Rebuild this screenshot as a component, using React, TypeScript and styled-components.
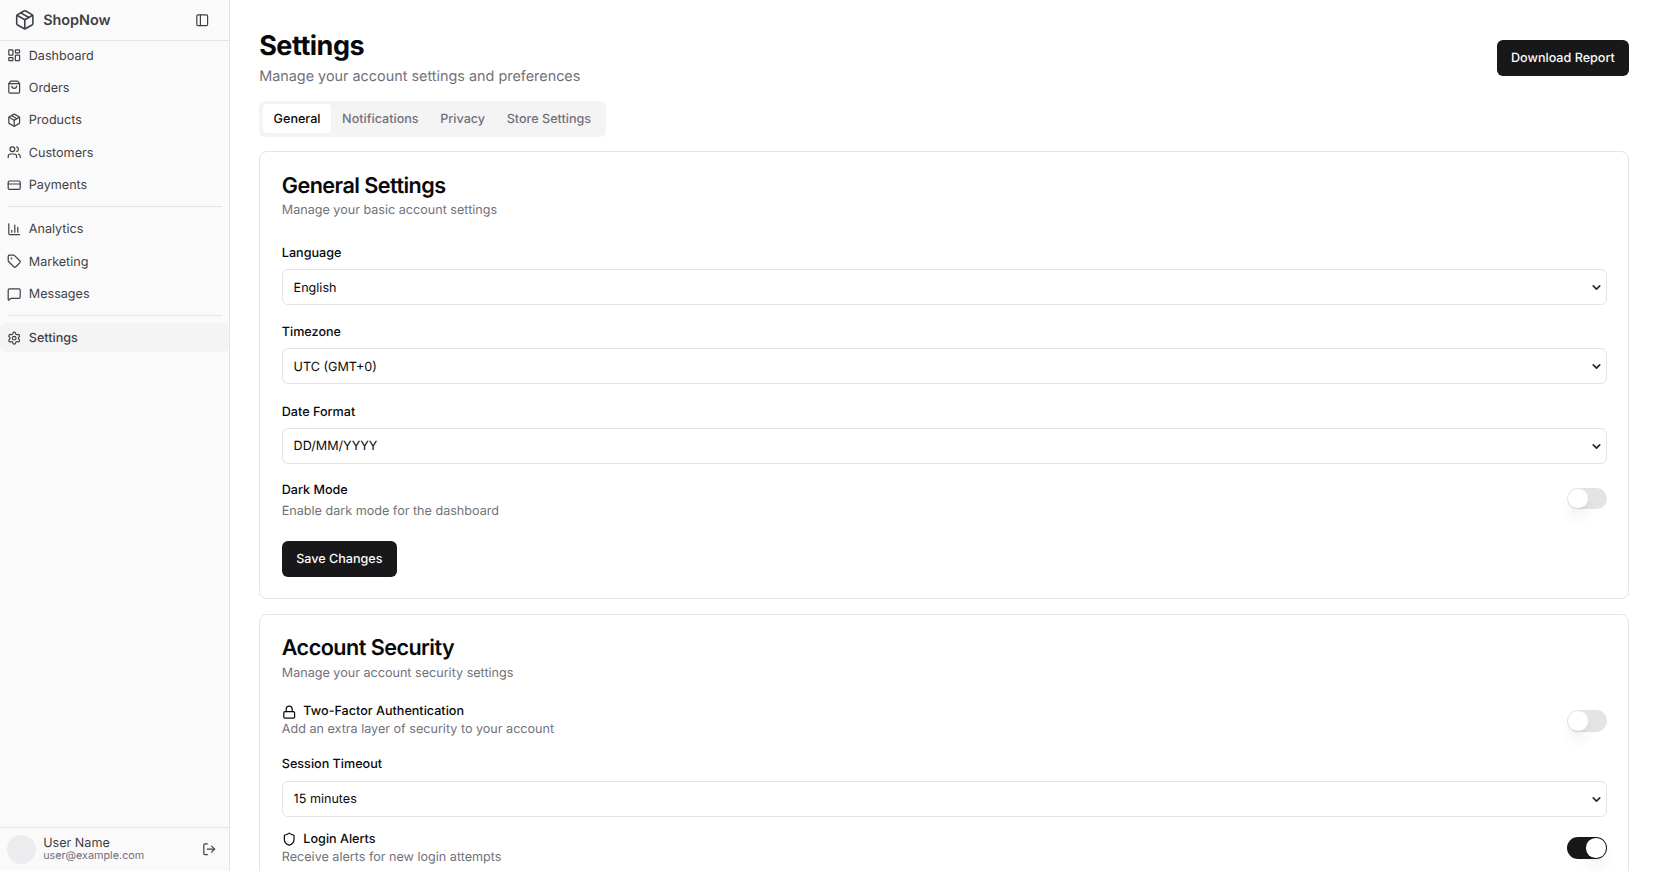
import React, { useState } from "react";
import styled, { createGlobalStyle } from "styled-components";
import {
  LayoutDashboard,
  ShoppingBag,
  Package,
  Users,
  CreditCard,
  BarChart3,
  Tag,
  MessageSquare,
  Settings,
  PanelLeft,
  LogOut,
  Lock,
  Shield,
  ChevronDown,
} from "lucide-react";

const GlobalStyle = createGlobalStyle`
  html, body {
    margin: 0;
    padding: 0;
    height: 100%;
    overflow: hidden;
    background: #fff;
  }
  body {
    font-family: "Inter", "Liberation Sans", sans-serif;
    color: #09090b;
    text-rendering: geometricPrecision;
  }
  * { box-sizing: border-box; }
`;

const Shell = styled.div`
  display: flex;
  width: 100%;
  height: 871px;
`;

const Sidebar = styled.aside`
  width: 230.4px;
  flex-shrink: 0;
  display: flex;
  flex-direction: column;
  background: #fafafa;
  border-right: 1px solid #e4e4e7;
`;

const Brand = styled.div`
  height: 40.8px;
  flex-shrink: 0;
  display: flex;
  align-items: center;
  gap: 7.2px;
  padding: 0 20px 0 14.4px;
  border-bottom: 1px solid #e4e4e7;
  color: #3f3f46;
`;

const BrandName = styled.span`
  flex: 1;
  padding-top: 2px;
  font-size: 14.4px;
  font-weight: 600;
`;

const Nav = styled.nav`
  flex: 1;
  display: flex;
  flex-direction: column;
  gap: 3.6px;
`;

const NavItem = styled.a<{ $active?: boolean }>`
  height: 28.8px;
  flex-shrink: 0;
  display: flex;
  align-items: center;
  gap: 7.2px;
  padding: 0 7.2px;
  font-size: 12.6px;
  color: #3f3f46;
  border-radius: 6px;
  background: ${(p) => (p.$active ? "#f4f4f5" : "transparent")};
  font-weight: ${(p) => (p.$active ? 500 : 400)};
`;

const NavLabel = styled.span`
  padding-top: 2px;
`;

const NavRule = styled.hr`
  border: 0;
  height: 1px;
  flex-shrink: 0;
  background: #e4e4e7;
  margin: 3.6px 7.2px;
`;

const UserBar = styled.div`
  height: 44px;
  flex-shrink: 0;
  display: flex;
  align-items: center;
  gap: 7.2px;
  padding: 0 13px 0 7.2px;
  border-top: 1px solid #e4e4e7;
  color: #3f3f46;
`;

const Avatar = styled.div`
  width: 28.8px;
  height: 28.8px;
  border-radius: 50%;
  background: #ececee;
`;

const UserText = styled.div`
  flex: 1;
  display: flex;
  flex-direction: column;
`;

const UserName = styled.span`
  font-size: 12.6px;
  line-height: 13px;
`;

const UserMail = styled.span`
  font-size: 10.8px;
  line-height: 12px;
  color: #71717a;
`;

const Main = styled.main`
  flex: 1;
  min-width: 0;
  height: 871px;
  overflow: hidden;
  padding: 28.8px 28.8px 0;
`;

const Header = styled.header`
  display: flex;
  justify-content: space-between;
  align-items: center;
  margin-bottom: 13.4px;
`;

const Title = styled.h1`
  margin: 0;
  padding-top: 1px;
  font-size: 27px;
  line-height: 32.4px;
  font-weight: 700;
  letter-spacing: -0.5px;
`;

const Subtitle = styled.p`
  margin: 3.6px 0 0;
  font-size: 14.4px;
  line-height: 21.6px;
  color: #71717a;
`;

const PrimaryButton = styled.button`
  height: 36px;
  padding: 1px 14.4px 0;
  border: 0;
  border-radius: 6px;
  background: #18181b;
  color: #fafafa;
  font: 500 12.6px "Inter", sans-serif;
  text-rendering: geometricPrecision;
`;

const Tabs = styled.div`
  display: flex;
  width: fit-content;
  height: 36px;
  padding: 3.6px;
  background: #f4f4f5;
  border-radius: 6px;
  margin-bottom: 14.4px;
`;

const Tab = styled.button<{ $active?: boolean }>`
  border: 0;
  padding: 2px 10.8px 0;
  border-radius: 4px;
  font: 500 12.6px "Inter", sans-serif;
  text-rendering: geometricPrecision;
  background: ${(p) => (p.$active ? "#fff" : "transparent")};
  color: ${(p) => (p.$active ? "#09090b" : "#71717a")};
`;

const Card = styled.section`
  border: 1px solid #e4e4e7;
  border-radius: 8px;
  padding: 21.6px;
  margin-bottom: 14.4px;
  background: #fff;
`;

const CardTitle = styled.h2`
  margin: 0;
  padding-top: 2px;
  font-size: 21.6px;
  line-height: 21.6px;
  font-weight: 600;
  letter-spacing: -0.54px;
`;

const CardSub = styled.p<{ $after: number }>`
  margin: 5px 0 ${(p) => p.$after}px;
  font-size: 12.6px;
  line-height: 18px;
  color: #71717a;
`;

const Field = styled.div<{ $after: number }>`
  margin-bottom: ${(p) => p.$after}px;
`;

const Label = styled.label`
  display: block;
  padding-top: 1px;
  font-size: 12.6px;
  font-weight: 500;
  line-height: 18px;
  margin-bottom: 6.2px;
`;

const SelectWrap = styled.div`
  position: relative;
  color: #27272a;

  svg {
    position: absolute;
    right: 4px;
    top: 12px;
    pointer-events: none;
  }
`;

const Select = styled.select`
  display: block;
  width: 100%;
  height: 36px;
  padding: 2px 7.2px 0 10.8px;
  appearance: none;
  border: 1px solid #e4e4e7;
  border-radius: 6px;
  background: #fff;
  color: #09090b;
  font: 400 12.6px "Inter", sans-serif;
  text-rendering: geometricPrecision;
`;

const ToggleRow = styled.div<{ $after: number }>`
  display: flex;
  justify-content: space-between;
  align-items: center;
  margin-bottom: ${(p) => p.$after}px;
`;

const RowTitle = styled.div`
  display: flex;
  align-items: center;
  gap: 7.2px;
  padding-top: 1px;
  font-size: 12.6px;
  font-weight: 500;
  line-height: 18px;
`;

const RowHint = styled.div<{ $gap?: number }>`
  margin-top: ${(p) => p.$gap ?? 0}px;
  font-size: 12.6px;
  line-height: 18px;
  color: #71717a;
`;

const Switch = styled.button<{ $on: boolean; $lift?: number }>`
  position: relative;
  width: 39.6px;
  height: 21.6px;
  padding: 0;
  margin-bottom: ${(p) => p.$lift ?? 0}px;
  border: 0;
  border-radius: 11px;
  background: ${(p) => (p.$on ? "#18181b" : "#e4e4e7")};

  &::after {
    content: "";
    position: absolute;
    top: 1px;
    left: ${(p) => (p.$on ? "19px" : "1.4px")};
    width: 19.6px;
    height: 19.6px;
    border-radius: 50%;
    background: #fff;
    box-shadow: 0 10px 15px -3px rgba(0, 0, 0, 0.1), 0 4px 6px -4px rgba(0, 0, 0, 0.1);
  }
`;

const mainLinks = [
  { label: "Dashboard", icon: LayoutDashboard },
  { label: "Orders", icon: ShoppingBag },
  { label: "Products", icon: Package },
  { label: "Customers", icon: Users },
  { label: "Payments", icon: CreditCard },
];

const growthLinks = [
  { label: "Analytics", icon: BarChart3 },
  { label: "Marketing", icon: Tag },
  { label: "Messages", icon: MessageSquare },
];

const SelectField = ({ label, value, after }: { label: string; value: string; after: number }) => (
  <Field $after={after}>
    <Label>{label}</Label>
    <SelectWrap>
      <Select defaultValue={value}>
        <option value={value}>{value}</option>
      </Select>
      <ChevronDown size={13} strokeWidth={3} />
    </SelectWrap>
  </Field>
);

const App = () => {
  const [darkMode, setDarkMode] = useState(false);
  const [twoFactor, setTwoFactor] = useState(false);
  const [loginAlerts, setLoginAlerts] = useState(true);

  return (
    <>
      <GlobalStyle />
      <Shell>
        <Sidebar>
          <Brand>
            <Package size={21.6} strokeWidth={1.75} />
            <BrandName>ShopNow</BrandName>
            <PanelLeft size={14.4} />
          </Brand>
          <Nav>
            {mainLinks.map((link) => (
              <NavItem key={link.label}>
                <link.icon size={14.4} />
                <NavLabel>{link.label}</NavLabel>
              </NavItem>
            ))}
            <NavRule />
            {growthLinks.map((link) => (
              <NavItem key={link.label}>
                <link.icon size={14.4} />
                <NavLabel>{link.label}</NavLabel>
              </NavItem>
            ))}
            <NavRule />
            <NavItem $active>
              <Settings size={14.4} />
              <NavLabel>Settings</NavLabel>
            </NavItem>
          </Nav>
          <UserBar>
            <Avatar />
            <UserText>
              <UserName>User Name</UserName>
              <UserMail>user@example.com</UserMail>
            </UserText>
            <LogOut size={14.4} />
          </UserBar>
        </Sidebar>
        <Main>
          <Header>
            <div>
              <Title>Settings</Title>
              <Subtitle>Manage your account settings and preferences</Subtitle>
            </div>
            <PrimaryButton type="button">Download Report</PrimaryButton>
          </Header>
          <Tabs>
            <Tab type="button" $active>General</Tab>
            <Tab type="button">Notifications</Tab>
            <Tab type="button">Privacy</Tab>
            <Tab type="button">Store Settings</Tab>
          </Tabs>
          <Card>
            <CardTitle>General Settings</CardTitle>
            <CardSub $after={23.8}>Manage your basic account settings</CardSub>
            <SelectField label="Language" value="English" after={17.8} />
            <SelectField label="Timezone" value="UTC (GMT+0)" after={18.2} />
            <SelectField label="Date Format" value="DD/MM/YYYY" after={17.6} />
            <ToggleRow $after={20.2}>
              <div>
                <RowTitle>Dark Mode</RowTitle>
                <RowHint $gap={2.4}>Enable dark mode for the dashboard</RowHint>
              </div>
              <Switch type="button" $lift={5} $on={darkMode} onClick={() => setDarkMode(!darkMode)} />
            </ToggleRow>
            <PrimaryButton type="button">Save Changes</PrimaryButton>
          </Card>
          <Card>
            <CardTitle>Account Security</CardTitle>
            <CardSub $after={19.4}>Manage your account security settings</CardSub>
            <ToggleRow $after={16}>
              <div>
                <RowTitle><Lock size={14.4} />Two-Factor Authentication</RowTitle>
                <RowHint>Add an extra layer of security to your account</RowHint>
              </div>
              <Switch type="button" $on={twoFactor} onClick={() => setTwoFactor(!twoFactor)} />
            </ToggleRow>
            <SelectField label="Session Timeout" value="15 minutes" after={13} />
            <ToggleRow $after={16}>
              <div>
                <RowTitle><Shield size={14.4} />Login Alerts</RowTitle>
                <RowHint>Receive alerts for new login attempts</RowHint>
              </div>
              <Switch type="button" $on={loginAlerts} onClick={() => setLoginAlerts(!loginAlerts)} />
            </ToggleRow>
          </Card>
        </Main>
      </Shell>
    </>
  );
};

export default App;
